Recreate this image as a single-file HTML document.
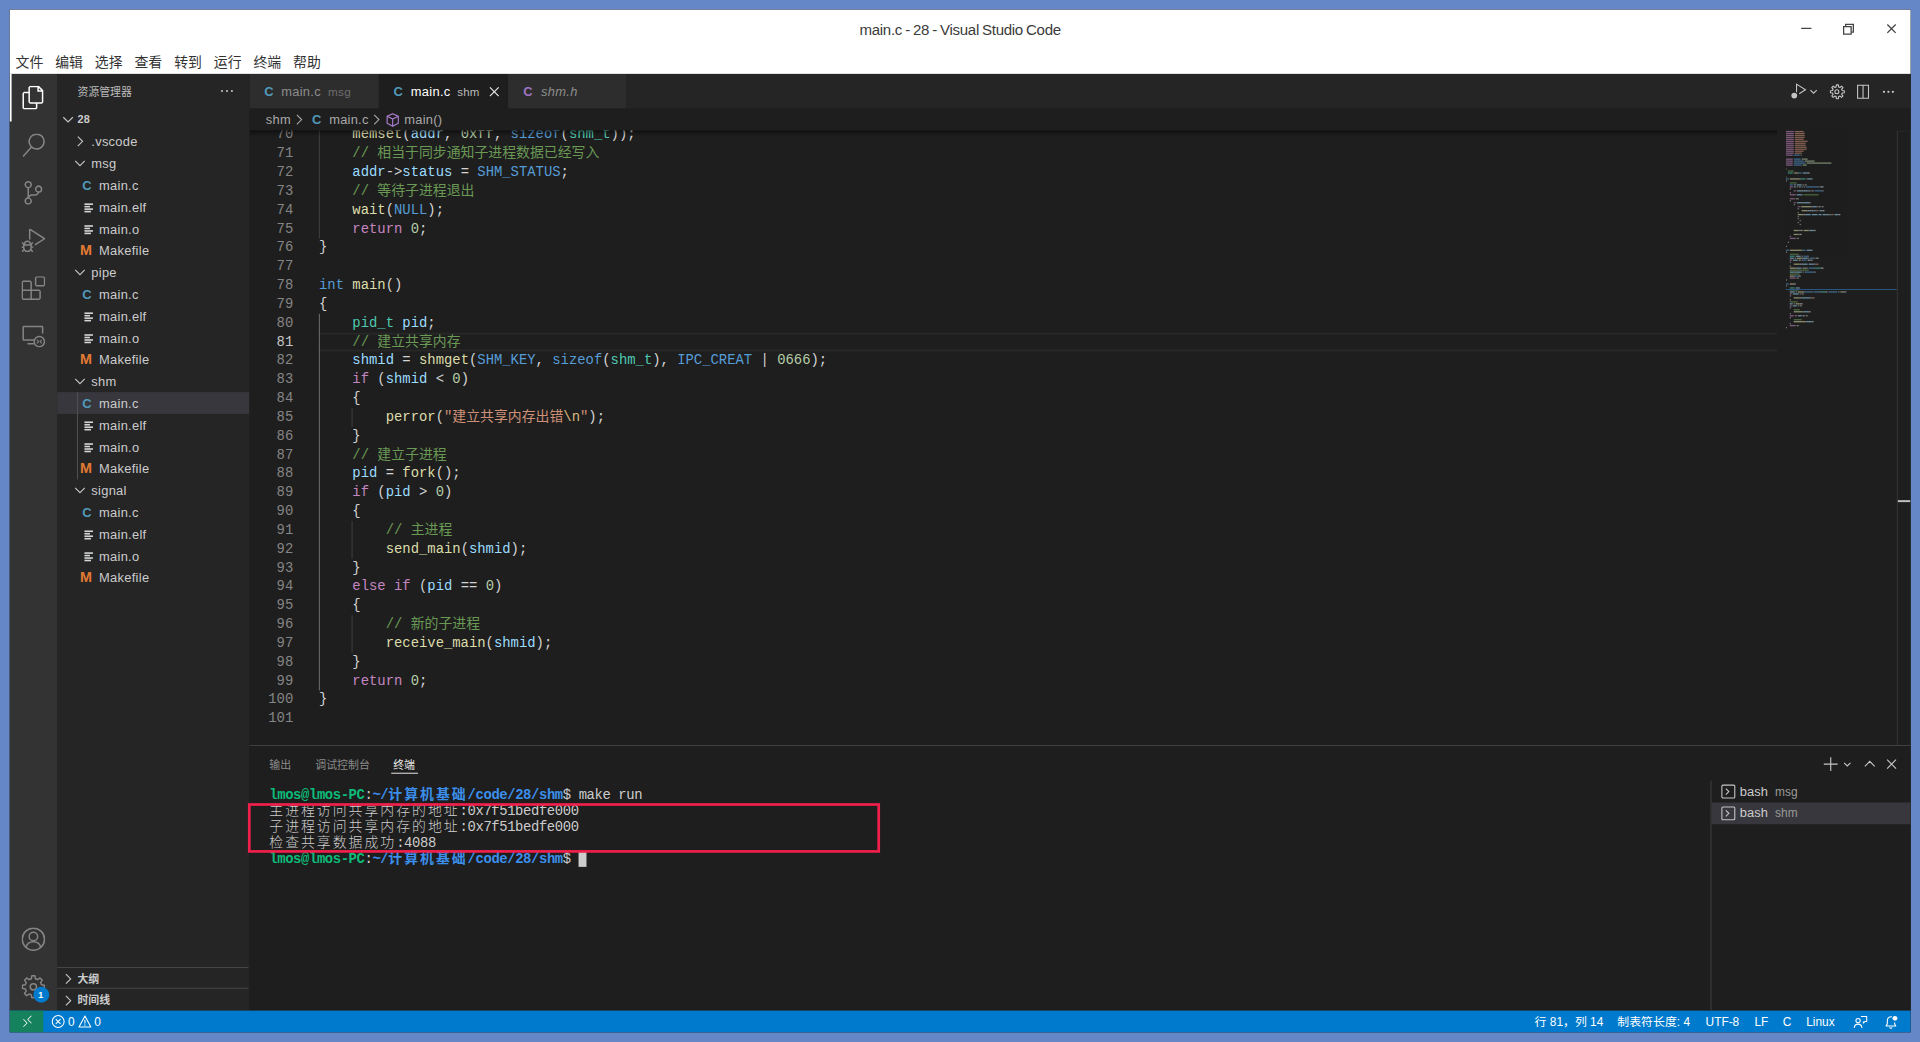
<!DOCTYPE html>
<html lang="zh-CN"><head><meta charset="utf-8"><title>main.c - 28 - Visual Studio Code</title>
<style>
*{box-sizing:border-box}
html,body{margin:0;padding:0}
body{width:1920px;height:1042px;overflow:hidden;background:#6587c7;position:relative;font-family:"Liberation Sans","Noto Sans CJK SC",sans-serif;}
#win{position:absolute;left:0;top:0;width:1918px;height:1031.8px;transform:translate(9.6px,9.5px) scale(0.9912);transform-origin:0 0;background:#252526;overflow:hidden;}
.abs{position:absolute}
#title{position:absolute;left:0;top:0;width:1918px;height:40px;line-height:41.4px;text-align:center;font-size:15.2px;color:#3b3b3b;letter-spacing:-0.3px;word-spacing:-0.8px}
#menu{position:absolute;left:0;top:40px;height:25px;display:flex;font-size:14px;color:#333;line-height:26.6px;}
#menu span{display:block;width:40px;text-align:center}
#back{position:absolute;left:0;top:0;width:1918px;height:65px;background:#fff}
#act{position:absolute;left:0;top:65px;width:48.6px;height:945px;background:#333333}
#side{position:absolute;left:48.4px;top:65px;width:194px;height:945px;background:#252526;color:#cccccc;font-size:13px;overflow:hidden}
#edwrap{position:absolute;left:242px;top:65px;width:1676px;height:945px;background:#1e1e1e;overflow:hidden}
#status{position:absolute;left:0;top:1009.6px;width:1918px;height:22.4px;background:#007acc;color:#fff;font-size:12px;line-height:24.2px}
.row{position:absolute;left:0;width:194px;height:22px;line-height:23px;white-space:nowrap;letter-spacing:0.3px}
.row .t{position:absolute;top:0}
.row svg{position:absolute}
.ico{position:absolute;top:0;font-weight:bold;font-size:13px}
#tabs{position:absolute;left:0;top:0;width:100%;height:35px;background:#252526}
.tab{position:absolute;top:0;height:35px;line-height:36.8px;font-size:13px;white-space:nowrap;letter-spacing:0.3px}
#bc{position:absolute;left:0;top:35px;width:100%;height:22px;line-height:24.2px;letter-spacing:0.25px;font-size:13px;color:#a9a9a9;background:#1e1e1e;white-space:nowrap}
#code{position:absolute;left:0;top:57px;width:100%;height:620.3px;overflow:hidden;font-family:"Liberation Mono","Noto Sans CJK SC",monospace;font-size:14px;line-height:19px;color:#d4d4d4}
.ln{position:absolute;left:0;width:44.2px;text-align:right;color:#858585;height:19px;white-space:pre;padding-top:0.3px;line-height:19px}
.cl{position:absolute;left:71px;height:19px;white-space:pre;padding-top:0.3px}
.k{color:#c586c0}.b{color:#569cd6}.ty{color:#4ec9b0}.f{color:#dcdcaa}.v{color:#9cdcfe}.n{color:#b5cea8}.s{color:#ce9178}.c{color:#6a9955}.e{color:#d7ba7d}
.ig{position:absolute;width:1px;background:#404040}
#panel{position:absolute;left:0;top:677.3px;width:100%;height:268px;border-top:1px solid rgba(128,128,128,.35);background:#1e1e1e}
.ptab{position:absolute;top:9.6px;height:18px;line-height:18px;font-size:11px;color:#8b8b8b;white-space:nowrap}
.trow{position:absolute;left:20px;height:16px;line-height:16px;font-family:"Liberation Mono","Noto Sans CJK SC",monospace;font-size:14px;color:#cccccc;white-space:pre;letter-spacing:-0.4px}
.trow .z{letter-spacing:2px;font-weight:300}
.trow .bl .z{font-weight:bold}
.g{color:#0dbc79;font-weight:bold}.bl{color:#3b8eea;font-weight:bold}
.sb{position:absolute;top:0;height:22px;white-space:nowrap}
</style></head>
<body>
<div id="win">
<div id="back"></div>
<div id="title">main.c - 28 - Visual Studio Code</div>
<svg class="abs" style="left:1795px;top:7px" width="115" height="26" viewBox="0 0 115 26" fill="none" stroke="#444" stroke-width="1.3">
<path d="M12.500 12h10.300"/>
<path d="M55.300 10.200h7.600v7.600h-7.600z"/><path d="M57.300 10v-2h7.800v7.800h-2"/>
<path d="M99.400 8.200l8.400 8.400M107.800 8.200l-8.400 8.400"/></svg>
<div id="menu"><span>文件</span><span>编辑</span><span>选择</span><span>查看</span><span>转到</span><span>运行</span><span>终端</span><span>帮助</span></div>
<div id="act">
<div class="abs" style="left:0;top:0;width:2px;height:48px;background:#fff"></div>
<svg class="abs" style="left:12px;top:12px" width="24" height="24" viewBox="0 0 24 24" fill="#ffffff"><path d="M17.5 0h-9L7 1.5V6H2.5L1 7.5v15.07L2.5 24h12.07L16 22.57V18h4.7l1.3-1.43V4.5L17.5 0zm0 2.12l2.38 2.38H17.5V2.12zm-3 20.38h-12v-15H7v9.07L8.5 18h6v4.5zm6-6h-12v-15H16V6h4.5v10.5z"/></svg>
<svg class="abs" style="left:12px;top:60px" width="24" height="24" viewBox="0 0 24 24" fill="#858585"><path d="M15.25 0a8.25 8.25 0 0 0-6.18 13.72L1 22.88l1.12 1 8.05-9.12A8.251 8.251 0 1 0 15.25.01V0zm0 15a6.75 6.75 0 1 1 0-13.5 6.75 6.75 0 0 1 0 13.5z"/></svg>
<svg class="abs" style="left:12px;top:108px" width="24" height="24" viewBox="0 0 24 24" fill="#858585"><path d="M21.007 8.222A3.738 3.738 0 0 0 15.045 5.2a3.737 3.737 0 0 0 1.156 6.583 2.988 2.988 0 0 1-2.668 1.67h-2.99a4.456 4.456 0 0 0-2.989 1.165V7.4a3.737 3.737 0 1 0-1.494 0v9.117a3.776 3.776 0 1 0 1.816.099 2.99 2.99 0 0 1 2.668-1.667h2.99a4.484 4.484 0 0 0 4.223-3.039 3.736 3.736 0 0 0 3.25-3.687zM4.565 3.738a2.242 2.242 0 1 1 4.484 0 2.242 2.242 0 0 1-4.484 0zm4.484 16.441a2.242 2.242 0 1 1-4.484 0 2.242 2.242 0 0 1 4.484 0zm8.221-9.715a2.242 2.242 0 1 1 0-4.485 2.242 2.242 0 0 1 0 4.485z"/></svg>
<svg class="abs" style="left:12px;top:156px" width="24" height="24" viewBox="0 0 24 24" fill="#858585"><path d="M10.94 13.5l-1.32 1.32a3.73 3.73 0 0 0-7.24 0L1.06 13.5 0 14.56l1.72 1.72-.22.22V18H0v1.5h1.5v.08c.077.489.214.966.41 1.42L0 22.94 1.06 24l1.65-1.65A4.308 4.308 0 0 0 6 24a4.31 4.31 0 0 0 3.29-1.65L10.94 24 12 22.94 10.09 21c.198-.464.336-.951.41-1.45v-.1H12V18h-1.5v-1.5l-.22-.22L12 14.56l-1.06-1.06zM6 13.5a2.25 2.25 0 0 1 2.25 2.25h-4.5A2.25 2.25 0 0 1 6 13.5zm3 6a3.33 3.33 0 0 1-3 3 3.33 3.33 0 0 1-3-3v-2.25h6v2.25zm14.76-9.9v1.26L13.5 17.37V15.6l8.5-5.37L9 2v9.46a5.07 5.07 0 0 0-1.5-.72V.63L8.64 0l15.12 9.6z"/></svg>
<svg class="abs" style="left:12px;top:204px" width="24" height="24" viewBox="0 0 24 24" fill="#858585"><path d="M13.5 1.5L15 0h7.5L24 1.5V9l-1.5 1.5H15L13.5 9V1.5zm1.5 0V9h7.5V1.5H15zM0 15V6l1.5-1.5H9L10.5 6v7.5H18l1.5 1.5v7.5L18 24H1.5L0 22.5V15zm9-1.5V6H1.5v7.5H9zM9 15H1.5v7.5H9V15zm1.5 7.5H18V15h-7.5v7.5z"/></svg>
<svg class="abs" style="left:12px;top:252px" width="24" height="24" viewBox="0 0 24 24" fill="none" stroke="#858585" stroke-width="1.5">
<path d="M13.5 16.5H2.2L1.7 16V3.3l.5-.5h18.6l.5.5V10"/><path d="M6 20.2h6.5"/><circle cx="18" cy="18" r="5.2"/><path d="M15.6 16.2l1.6 1.8-1.6 1.8M20.4 16.2l-1.6 1.8 1.6 1.8" stroke-width="1.1"/></svg>
<svg class="abs" style="left:12px;top:861px" width="24" height="24" viewBox="0 0 24 24" fill="none" stroke="#858585" stroke-width="1.5">
<circle cx="12" cy="12" r="11.2"/><circle cx="12" cy="9.3" r="4.3"/><path d="M4.6 20.2c.8-3.6 3.7-5.7 7.4-5.7s6.600 2.100 7.400 5.700"/></svg>
<svg class="abs" style="left:12px;top:909px" width="24" height="24" viewBox="0 0 24 24" fill="none" stroke="#858585" stroke-width="1.5" stroke-linejoin="round"><path d="M23.09 10.42L23.09 13.58L20.14 14.09L19.23 16.28L20.96 18.72L18.72 20.96L16.28 19.23L14.09 20.14L13.58 23.09L10.42 23.09L9.91 20.14L7.72 19.23L5.28 20.96L3.04 18.72L4.77 16.28L3.86 14.09L0.91 13.58L0.91 10.42L3.86 9.91L4.77 7.72L3.04 5.28L5.28 3.04L7.72 4.77L9.91 3.86L10.42 0.91L13.58 0.91L14.09 3.86L16.28 4.77L18.72 3.04L20.96 5.28L19.23 7.72L20.14 9.91Z"/><circle cx="12" cy="12" r="3.2"/></svg>
<div class="abs" style="left:23.5px;top:921px;width:16px;height:16px;border-radius:8px;background:#007acc;color:#fff;font-size:9px;font-weight:bold;line-height:16px;text-align:center">1</div>
</div>
<div id="side">
<div class="abs" style="left:20px;top:0;height:35px;line-height:36px;font-size:11px;color:#bbbbbb">资源管理器</div>
<svg class="abs" style="left:163px;top:9.400px" width="16" height="16" viewBox="0 0 16 16" fill="#c5c5c5"><circle cx="3.300" cy="8.300" r="1.050"/><circle cx="8.300" cy="8.300" r="1.050"/><circle cx="13.300" cy="8.300" r="1.050"/></svg>
<div class="row" style="top:35px;"><svg style="left:2.5px;top:3px" width="16" height="16" viewBox="0 0 16 16" fill="none" stroke="#c5c5c5" stroke-width="1.15"><path d="M3.2 5.7 8 10.5l4.800-4.800"/></svg><span class="t" style="left:20px;font-size:11px;font-weight:bold;color:#cccccc">28</span></div>
<div class="row" style="top:57px;"><svg style="left:14.3px;top:3px" width="16" height="16" viewBox="0 0 16 16" fill="none" stroke="#c5c5c5" stroke-width="1.15"><path d="M5.800 3.200 10.600 8l-4.800 4.800"/></svg><span class="t" style="left:34px">.vscode</span></div>
<div class="row" style="top:79px;"><svg style="left:14.3px;top:3px" width="16" height="16" viewBox="0 0 16 16" fill="none" stroke="#c5c5c5" stroke-width="1.15"><path d="M3.2 5.7 8 10.5l4.800-4.800"/></svg><span class="t" style="left:34px">msg</span></div>
<div class="row" style="top:101px;"><span class="ico" style="left:25px;color:#519aba">C</span><span class="t" style="left:41.8px">main.c</span></div>
<div class="row" style="top:123px;"><svg style="left:26px;top:5.5px" width="12" height="12" viewBox="0 0 12 12" fill="#d4d7d6"><rect x="1.500" y="1.600" width="8.6" height="1.600"/><rect x="1.500" y="4.100" width="5.600" height="1.600"/><rect x="1.500" y="6.600" width="8.6" height="1.600"/><rect x="1.500" y="9.100" width="6.600" height="1.600"/></svg><span class="t" style="left:41.8px">main.elf</span></div>
<div class="row" style="top:145px;"><svg style="left:26px;top:5.5px" width="12" height="12" viewBox="0 0 12 12" fill="#d4d7d6"><rect x="1.500" y="1.600" width="8.6" height="1.600"/><rect x="1.500" y="4.100" width="5.600" height="1.600"/><rect x="1.500" y="6.600" width="8.6" height="1.600"/><rect x="1.500" y="9.100" width="6.600" height="1.600"/></svg><span class="t" style="left:41.8px">main.o</span></div>
<div class="row" style="top:167px;"><span class="ico" style="left:22.6px;color:#e37933;font-size:14.5px">M</span><span class="t" style="left:41.8px">Makefile</span></div>
<div class="row" style="top:189px;"><svg style="left:14.3px;top:3px" width="16" height="16" viewBox="0 0 16 16" fill="none" stroke="#c5c5c5" stroke-width="1.15"><path d="M3.2 5.7 8 10.5l4.800-4.800"/></svg><span class="t" style="left:34px">pipe</span></div>
<div class="row" style="top:211px;"><span class="ico" style="left:25px;color:#519aba">C</span><span class="t" style="left:41.8px">main.c</span></div>
<div class="row" style="top:233px;"><svg style="left:26px;top:5.5px" width="12" height="12" viewBox="0 0 12 12" fill="#d4d7d6"><rect x="1.500" y="1.600" width="8.6" height="1.600"/><rect x="1.500" y="4.100" width="5.600" height="1.600"/><rect x="1.500" y="6.600" width="8.6" height="1.600"/><rect x="1.500" y="9.100" width="6.600" height="1.600"/></svg><span class="t" style="left:41.8px">main.elf</span></div>
<div class="row" style="top:255px;"><svg style="left:26px;top:5.5px" width="12" height="12" viewBox="0 0 12 12" fill="#d4d7d6"><rect x="1.500" y="1.600" width="8.6" height="1.600"/><rect x="1.500" y="4.100" width="5.600" height="1.600"/><rect x="1.500" y="6.600" width="8.6" height="1.600"/><rect x="1.500" y="9.100" width="6.600" height="1.600"/></svg><span class="t" style="left:41.8px">main.o</span></div>
<div class="row" style="top:277px;"><span class="ico" style="left:22.6px;color:#e37933;font-size:14.5px">M</span><span class="t" style="left:41.8px">Makefile</span></div>
<div class="row" style="top:299px;"><svg style="left:14.3px;top:3px" width="16" height="16" viewBox="0 0 16 16" fill="none" stroke="#c5c5c5" stroke-width="1.15"><path d="M3.2 5.7 8 10.5l4.800-4.800"/></svg><span class="t" style="left:34px">shm</span></div>
<div class="row" style="top:321px;background:#37373d;"><span class="ico" style="left:25px;color:#519aba">C</span><span class="t" style="left:41.8px">main.c</span></div>
<div class="row" style="top:343px;"><svg style="left:26px;top:5.5px" width="12" height="12" viewBox="0 0 12 12" fill="#d4d7d6"><rect x="1.500" y="1.600" width="8.6" height="1.600"/><rect x="1.500" y="4.100" width="5.600" height="1.600"/><rect x="1.500" y="6.600" width="8.6" height="1.600"/><rect x="1.500" y="9.100" width="6.600" height="1.600"/></svg><span class="t" style="left:41.8px">main.elf</span></div>
<div class="row" style="top:365px;"><svg style="left:26px;top:5.5px" width="12" height="12" viewBox="0 0 12 12" fill="#d4d7d6"><rect x="1.500" y="1.600" width="8.6" height="1.600"/><rect x="1.500" y="4.100" width="5.600" height="1.600"/><rect x="1.500" y="6.600" width="8.6" height="1.600"/><rect x="1.500" y="9.100" width="6.600" height="1.600"/></svg><span class="t" style="left:41.8px">main.o</span></div>
<div class="row" style="top:387px;"><span class="ico" style="left:22.6px;color:#e37933;font-size:14.5px">M</span><span class="t" style="left:41.8px">Makefile</span></div>
<div class="row" style="top:409px;"><svg style="left:14.3px;top:3px" width="16" height="16" viewBox="0 0 16 16" fill="none" stroke="#c5c5c5" stroke-width="1.15"><path d="M3.2 5.7 8 10.5l4.800-4.800"/></svg><span class="t" style="left:34px">signal</span></div>
<div class="row" style="top:431px;"><span class="ico" style="left:25px;color:#519aba">C</span><span class="t" style="left:41.8px">main.c</span></div>
<div class="row" style="top:453px;"><svg style="left:26px;top:5.5px" width="12" height="12" viewBox="0 0 12 12" fill="#d4d7d6"><rect x="1.500" y="1.600" width="8.6" height="1.600"/><rect x="1.500" y="4.100" width="5.600" height="1.600"/><rect x="1.500" y="6.600" width="8.6" height="1.600"/><rect x="1.500" y="9.100" width="6.600" height="1.600"/></svg><span class="t" style="left:41.8px">main.elf</span></div>
<div class="row" style="top:475px;"><svg style="left:26px;top:5.5px" width="12" height="12" viewBox="0 0 12 12" fill="#d4d7d6"><rect x="1.500" y="1.600" width="8.6" height="1.600"/><rect x="1.500" y="4.100" width="5.600" height="1.600"/><rect x="1.500" y="6.600" width="8.6" height="1.600"/><rect x="1.500" y="9.100" width="6.600" height="1.600"/></svg><span class="t" style="left:41.8px">main.o</span></div>
<div class="row" style="top:497px;"><span class="ico" style="left:22.6px;color:#e37933;font-size:14.5px">M</span><span class="t" style="left:41.8px">Makefile</span></div>
<div class="abs" style="left:19.4px;top:321px;width:1px;height:88px;background:#505050"></div>
<div class="abs" style="left:0;top:900.5px;width:193px;height:22px;border-top:1px solid rgba(204,204,204,.2);line-height:23px"><span class="row" style="top:0"><svg style="left:2.5px;top:3.5px" width="16" height="16" viewBox="0 0 16 16" fill="none" stroke="#c5c5c5" stroke-width="1.15"><path d="M5.800 3.200 10.600 8l-4.800 4.800"/></svg></span><span class="abs" style="left:20px;top:0;font-size:11px;font-weight:bold;color:#cccccc">大纲</span></div>
<div class="abs" style="left:0;top:922.4px;width:193px;height:22px;border-top:1px solid rgba(204,204,204,.2);line-height:23px"><span class="row" style="top:0"><svg style="left:2.5px;top:3.5px" width="16" height="16" viewBox="0 0 16 16" fill="none" stroke="#c5c5c5" stroke-width="1.15"><path d="M5.800 3.200 10.600 8l-4.800 4.800"/></svg></span><span class="abs" style="left:20px;top:0;font-size:11px;font-weight:bold;color:#cccccc">时间线</span></div>
</div>
<div id="edwrap">
<div id="tabs">
<div class="tab" style="left:0;width:131px;background:#2d2d2d;border-right:1px solid #252526;color:#8e8e8e"><span class="ico" style="left:15px;color:#519aba">C</span><span class="abs" style="left:32px">main.c</span><span class="abs" style="left:79.200px;font-size:11.800px;color:#6e6e6e">msg</span></div>
<div class="tab" style="left:131px;width:130px;background:#1e1e1e;color:#ffffff"><span class="ico" style="left:14.200px;color:#519aba">C</span><span class="abs" style="left:31.800px">main.c</span><span class="abs" style="left:78.500px;font-size:11.600px;color:#b9b9b9">shm</span><svg class="abs" style="left:107.500px;top:9.500px" width="16" height="16" viewBox="0 0 16 16" fill="none" stroke="#e8e8e8" stroke-width="1.2"><path d="M3.600 3.600l8.800 8.800M12.400 3.600l-8.800 8.800"/></svg></div>
<div class="tab" style="left:261px;width:120px;background:#2d2d2d;border-right:1px solid #252526;color:#8e8e8e"><span class="ico" style="left:15.300px;color:#a074c4">C</span><span class="abs" style="left:33.200px;font-style:italic">shm.h</span></div>
<svg class="abs" style="left:1545px;top:8px" width="130" height="20" viewBox="0 0 130 20" fill="none" stroke="#c5c5c5" stroke-width="1.1">
<g transform="translate(8.3 0)"><path d="M7.500 10.500V2.300l9 5.700-6.300 4"/><circle cx="5.200" cy="13.800" r="2.900" fill="#c5c5c5" stroke="none"/><path d="M21.500 8.300l3.200 3.200 3.200-3.200"/></g>
<circle cx="56.500" cy="10" r="2"/>
<path d="M77.400 3.500h11v13h-11zM82.900 3.500v13"/>
<g fill="#c5c5c5" stroke="none"><circle cx="104" cy="10" r="1.150"/><circle cx="108.500" cy="10" r="1.150"/><circle cx="113" cy="10" r="1.150"/></g></svg>
<svg class="abs" style="left:1593.5px;top:10px" width="16" height="16" viewBox="0 0 24 24" fill="none" stroke="#c5c5c5" stroke-width="1.700" stroke-linejoin="round"><path d="M22.49 10.51L22.49 13.49L19.36 13.89L18.54 15.87L20.48 18.36L18.36 20.48L15.87 18.54L13.89 19.36L13.49 22.49L10.51 22.49L10.11 19.36L8.13 18.54L5.64 20.48L3.52 18.36L5.46 15.87L4.64 13.89L1.51 13.49L1.51 10.51L4.64 10.11L5.46 8.13L3.52 5.64L5.64 3.52L8.13 5.46L10.11 4.64L10.51 1.51L13.49 1.51L13.89 4.64L15.87 5.46L18.36 3.52L20.48 5.64L18.54 8.13L19.36 10.11Z"/></svg>
</div>
<div id="bc"><span class="abs" style="left:16.500px">shm</span><svg class="abs" style="left:41.600px;top:3px" width="16" height="16" viewBox="0 0 16 16" fill="none" stroke="#a9a9a9" stroke-width="1.100"><path d="M5.800 3.200 10.600 8l-4.800 4.800"/></svg><span class="ico" style="left:63px;color:#519aba">C</span><span class="abs" style="left:80.400px">main.c</span><svg class="abs" style="left:120px;top:3px" width="16" height="16" viewBox="0 0 16 16" fill="none" stroke="#a9a9a9" stroke-width="1.100"><path d="M5.800 3.200 10.600 8l-4.800 4.800"/></svg><svg class="abs" style="left:136.600px;top:3.500px" width="15" height="15" viewBox="0 0 16 16" fill="none" stroke="#b180d7" stroke-width="1.200" stroke-linejoin="round"><path d="M8 1.300l6 2.700v7.600l-6 3.100-6-3.100V4z"/><path d="M2 4l6 2.900L14 4M8 6.900v7.800"/></svg><span class="abs" style="left:156.200px">main()</span></div>
<div id="code">
<div class="abs" style="left:69.5px;top:203.5px;width:1471.9px;height:19px;border-top:2px solid #282828;border-bottom:2px solid #282828"></div>
<div class="ig" style="left:69.5px;top:-5.5px;height:114px"></div>
<div class="ig" style="left:69.5px;top:184.5px;height:380px;background:#707070"></div>
<div class="ig" style="left:103.1px;top:279.5px;height:19px"></div>
<div class="ig" style="left:103.1px;top:393.5px;height:38px"></div>
<div class="ig" style="left:103.1px;top:488.5px;height:38px"></div>
<div class="ln" style="top:-5.5px;color:#858585">70</div><div class="cl" style="top:-5.5px;left:70.2px">    <span class="f">memset</span>(<span class="v">addr</span>, <span class="n">0xff</span>, <span class="b">sizeof</span>(<span class="ty">shm_t</span>));</div>
<div class="ln" style="top:13.5px;color:#858585">71</div><div class="cl" style="top:13.5px;left:70.2px">    <span class="c">// 相当于同步通知子进程数据已经写入</span></div>
<div class="ln" style="top:32.5px;color:#858585">72</div><div class="cl" style="top:32.5px;left:70.2px">    <span class="v">addr</span>-&gt;<span class="v">status</span> = <span class="b">SHM_STATUS</span>;</div>
<div class="ln" style="top:51.5px;color:#858585">73</div><div class="cl" style="top:51.5px;left:70.2px">    <span class="c">// 等待子进程退出</span></div>
<div class="ln" style="top:70.5px;color:#858585">74</div><div class="cl" style="top:70.5px;left:70.2px">    <span class="f">wait</span>(<span class="b">NULL</span>);</div>
<div class="ln" style="top:89.5px;color:#858585">75</div><div class="cl" style="top:89.5px;left:70.2px">    <span class="k">return</span> <span class="n">0</span>;</div>
<div class="ln" style="top:108.5px;color:#858585">76</div><div class="cl" style="top:108.5px;left:70.2px">}</div>
<div class="ln" style="top:127.5px;color:#858585">77</div>
<div class="ln" style="top:146.5px;color:#858585">78</div><div class="cl" style="top:146.5px;left:70.2px"><span class="b">int</span> <span class="f">main</span>()</div>
<div class="ln" style="top:165.5px;color:#858585">79</div><div class="cl" style="top:165.5px;left:70.2px">{</div>
<div class="ln" style="top:184.5px;color:#858585">80</div><div class="cl" style="top:184.5px;left:70.2px">    <span class="ty">pid_t</span> <span class="v">pid</span>;</div>
<div class="ln" style="top:203.5px;color:#c6c6c6">81</div><div class="cl" style="top:203.5px;left:70.2px">    <span class="c">// 建立共享内存</span></div>
<div class="ln" style="top:222.5px;color:#858585">82</div><div class="cl" style="top:222.5px;left:70.2px">    <span class="v">shmid</span> = <span class="f">shmget</span>(<span class="b">SHM_KEY</span>, <span class="b">sizeof</span>(<span class="ty">shm_t</span>), <span class="b">IPC_CREAT</span> | <span class="n">0666</span>);</div>
<div class="ln" style="top:241.5px;color:#858585">83</div><div class="cl" style="top:241.5px;left:70.2px">    <span class="k">if</span> (<span class="v">shmid</span> &lt; <span class="n">0</span>)</div>
<div class="ln" style="top:260.5px;color:#858585">84</div><div class="cl" style="top:260.5px;left:70.2px">    {</div>
<div class="ln" style="top:279.5px;color:#858585">85</div><div class="cl" style="top:279.5px;left:70.2px">        <span class="f">perror</span>(<span class="s">"建立共享内存出错</span><span class="e">\n</span><span class="s">"</span>);</div>
<div class="ln" style="top:298.5px;color:#858585">86</div><div class="cl" style="top:298.5px;left:70.2px">    }</div>
<div class="ln" style="top:317.5px;color:#858585">87</div><div class="cl" style="top:317.5px;left:70.2px">    <span class="c">// 建立子进程</span></div>
<div class="ln" style="top:336.5px;color:#858585">88</div><div class="cl" style="top:336.5px;left:70.2px">    <span class="v">pid</span> = <span class="f">fork</span>();</div>
<div class="ln" style="top:355.5px;color:#858585">89</div><div class="cl" style="top:355.5px;left:70.2px">    <span class="k">if</span> (<span class="v">pid</span> &gt; <span class="n">0</span>)</div>
<div class="ln" style="top:374.5px;color:#858585">90</div><div class="cl" style="top:374.5px;left:70.2px">    {</div>
<div class="ln" style="top:393.5px;color:#858585">91</div><div class="cl" style="top:393.5px;left:70.2px">        <span class="c">// 主进程</span></div>
<div class="ln" style="top:412.5px;color:#858585">92</div><div class="cl" style="top:412.5px;left:70.2px">        <span class="f">send_main</span>(<span class="v">shmid</span>);</div>
<div class="ln" style="top:431.5px;color:#858585">93</div><div class="cl" style="top:431.5px;left:70.2px">    }</div>
<div class="ln" style="top:450.5px;color:#858585">94</div><div class="cl" style="top:450.5px;left:70.2px">    <span class="k">else</span> <span class="k">if</span> (<span class="v">pid</span> == <span class="n">0</span>)</div>
<div class="ln" style="top:469.5px;color:#858585">95</div><div class="cl" style="top:469.5px;left:70.2px">    {</div>
<div class="ln" style="top:488.5px;color:#858585">96</div><div class="cl" style="top:488.5px;left:70.2px">        <span class="c">// 新的子进程</span></div>
<div class="ln" style="top:507.5px;color:#858585">97</div><div class="cl" style="top:507.5px;left:70.2px">        <span class="f">receive_main</span>(<span class="v">shmid</span>);</div>
<div class="ln" style="top:526.5px;color:#858585">98</div><div class="cl" style="top:526.5px;left:70.2px">    }</div>
<div class="ln" style="top:545.5px;color:#858585">99</div><div class="cl" style="top:545.5px;left:70.2px">    <span class="k">return</span> <span class="n">0</span>;</div>
<div class="ln" style="top:564.5px;color:#858585">100</div><div class="cl" style="top:564.5px;left:70.2px">}</div>
<div class="ln" style="top:583.5px;color:#858585">101</div>
<div class="abs" style="left:0;top:0;width:1541.4px;height:6px;box-shadow:#000 0 6px 6px -6px inset"></div>
<svg class="abs" style="left:1549.5px;top:0" width="112" height="210" viewBox="0 0 112 210" opacity="0.58"><rect x="0" y="0.3" width="8" height="1.300" fill="#c586c0"/><rect x="9" y="0.3" width="9" height="1.300" fill="#ce9178"/><rect x="0" y="2.3" width="8" height="1.300" fill="#c586c0"/><rect x="9" y="2.3" width="10" height="1.300" fill="#ce9178"/><rect x="0" y="4.3" width="8" height="1.300" fill="#c586c0"/><rect x="9" y="4.3" width="10" height="1.300" fill="#ce9178"/><rect x="0" y="6.3" width="8" height="1.300" fill="#c586c0"/><rect x="9" y="6.3" width="10" height="1.300" fill="#ce9178"/><rect x="0" y="8.3" width="8" height="1.300" fill="#c586c0"/><rect x="9" y="8.3" width="9" height="1.300" fill="#ce9178"/><rect x="0" y="10.3" width="8" height="1.300" fill="#c586c0"/><rect x="9" y="10.3" width="13" height="1.300" fill="#ce9178"/><rect x="0" y="12.3" width="8" height="1.300" fill="#c586c0"/><rect x="9" y="12.3" width="11" height="1.300" fill="#ce9178"/><rect x="0" y="14.3" width="8" height="1.300" fill="#c586c0"/><rect x="9" y="14.3" width="11" height="1.300" fill="#ce9178"/><rect x="0" y="16.3" width="8" height="1.300" fill="#c586c0"/><rect x="9" y="16.3" width="12" height="1.300" fill="#ce9178"/><rect x="0" y="18.3" width="8" height="1.300" fill="#c586c0"/><rect x="9" y="18.3" width="12" height="1.300" fill="#ce9178"/><rect x="0" y="20.3" width="8" height="1.300" fill="#c586c0"/><rect x="9" y="20.3" width="9" height="1.300" fill="#ce9178"/><rect x="0" y="22.3" width="8" height="1.300" fill="#c586c0"/><rect x="9" y="22.3" width="7" height="1.300" fill="#ce9178"/><rect x="0" y="24.3" width="7" height="1.300" fill="#c586c0"/><rect x="8" y="24.3" width="6" height="1.300" fill="#569cd6"/><rect x="15" y="24.3" width="1" height="1.300" fill="#b5cea8"/><rect x="0" y="28.3" width="7" height="1.300" fill="#c586c0"/><rect x="8" y="28.3" width="7" height="1.300" fill="#569cd6"/><rect x="16" y="28.3" width="6" height="1.300" fill="#b5cea8"/><rect x="0" y="30.3" width="7" height="1.300" fill="#c586c0"/><rect x="8" y="30.3" width="10" height="1.300" fill="#569cd6"/><rect x="19" y="30.3" width="10" height="1.300" fill="#b5cea8"/><rect x="0" y="32.3" width="7" height="1.300" fill="#c586c0"/><rect x="8" y="32.3" width="12" height="1.300" fill="#569cd6"/><rect x="21" y="32.3" width="25" height="1.300" fill="#b5cea8"/><rect x="0" y="34.3" width="7" height="1.300" fill="#c586c0"/><rect x="8" y="34.3" width="8" height="1.300" fill="#569cd6"/><rect x="17" y="34.3" width="4" height="1.300" fill="#b5cea8"/><rect x="0" y="38.3" width="1" height="1.300" fill="#6a9955"/><rect x="2" y="40.3" width="6" height="1.300" fill="#6a9955"/><rect x="2" y="42.3" width="5" height="1.300" fill="#4ec9b0"/><rect x="8" y="42.3" width="1" height="1.300" fill="#d4d4d4"/><rect x="9" y="42.3" width="3" height="1.300" fill="#dcdcaa"/><rect x="12" y="42.3" width="1" height="1.300" fill="#d4d4d4"/><rect x="13" y="42.3" width="3" height="1.300" fill="#569cd6"/><rect x="17" y="42.3" width="5" height="1.300" fill="#9cdcfe"/><rect x="22" y="42.3" width="2" height="1.300" fill="#d4d4d4"/><rect x="0" y="46.3" width="1" height="1.300" fill="#6a9955"/><rect x="0" y="48.3" width="3" height="1.300" fill="#569cd6"/><rect x="4" y="48.3" width="10" height="1.300" fill="#dcdcaa"/><rect x="14" y="48.3" width="1" height="1.300" fill="#d4d4d4"/><rect x="15" y="48.3" width="5" height="1.300" fill="#4ec9b0"/><rect x="21" y="48.3" width="1" height="1.300" fill="#d4d4d4"/><rect x="22" y="48.3" width="4" height="1.300" fill="#9cdcfe"/><rect x="26" y="48.3" width="1" height="1.300" fill="#d4d4d4"/><rect x="0" y="50.3" width="1" height="1.300" fill="#d4d4d4"/><rect x="4" y="52.3" width="7" height="1.300" fill="#6a9955"/><rect x="4" y="54.3" width="3" height="1.300" fill="#569cd6"/><rect x="8" y="54.3" width="1" height="1.300" fill="#9cdcfe"/><rect x="9" y="54.3" width="1" height="1.300" fill="#d4d4d4"/><rect x="11" y="54.3" width="5" height="1.300" fill="#9cdcfe"/><rect x="17" y="54.3" width="1" height="1.300" fill="#d4d4d4"/><rect x="19" y="54.3" width="1" height="1.300" fill="#b5cea8"/><rect x="20" y="54.3" width="1" height="1.300" fill="#d4d4d4"/><rect x="4" y="56.3" width="3" height="1.300" fill="#c586c0"/><rect x="8" y="56.3" width="1" height="1.300" fill="#d4d4d4"/><rect x="9" y="56.3" width="1" height="1.300" fill="#9cdcfe"/><rect x="11" y="56.3" width="1" height="1.300" fill="#d4d4d4"/><rect x="13" y="56.3" width="1" height="1.300" fill="#b5cea8"/><rect x="14" y="56.3" width="1" height="1.300" fill="#d4d4d4"/><rect x="16" y="56.3" width="1" height="1.300" fill="#9cdcfe"/><rect x="18" y="56.3" width="1" height="1.300" fill="#d4d4d4"/><rect x="20" y="56.3" width="12" height="1.300" fill="#569cd6"/><rect x="32" y="56.3" width="1" height="1.300" fill="#d4d4d4"/><rect x="34" y="56.3" width="1" height="1.300" fill="#9cdcfe"/><rect x="35" y="56.3" width="3" height="1.300" fill="#d4d4d4"/><rect x="4" y="58.3" width="1" height="1.300" fill="#d4d4d4"/><rect x="8" y="60.3" width="2" height="1.300" fill="#c586c0"/><rect x="11" y="60.3" width="1" height="1.300" fill="#d4d4d4"/><rect x="12" y="60.3" width="4" height="1.300" fill="#9cdcfe"/><rect x="16" y="60.3" width="2" height="1.300" fill="#d4d4d4"/><rect x="18" y="60.3" width="4" height="1.300" fill="#9cdcfe"/><rect x="22" y="60.3" width="1" height="1.300" fill="#d4d4d4"/><rect x="23" y="60.3" width="1" height="1.300" fill="#9cdcfe"/><rect x="24" y="60.3" width="1" height="1.300" fill="#d4d4d4"/><rect x="26" y="60.3" width="2" height="1.300" fill="#d4d4d4"/><rect x="29" y="60.3" width="8" height="1.300" fill="#569cd6"/><rect x="37" y="60.3" width="1" height="1.300" fill="#d4d4d4"/><rect x="4" y="62.3" width="1" height="1.300" fill="#d4d4d4"/><rect x="4" y="64.3" width="6" height="1.300" fill="#c586c0"/><rect x="11" y="64.3" width="5" height="1.300" fill="#9cdcfe"/><rect x="16" y="64.3" width="1" height="1.300" fill="#d4d4d4"/><rect x="18" y="64.3" width="15" height="1.300" fill="#6a9955"/><rect x="4" y="68.3" width="5" height="1.300" fill="#c586c0"/><rect x="10" y="68.3" width="1" height="1.300" fill="#d4d4d4"/><rect x="11" y="68.3" width="1" height="1.300" fill="#b5cea8"/><rect x="12" y="68.3" width="1" height="1.300" fill="#d4d4d4"/><rect x="4" y="70.3" width="1" height="1.300" fill="#d4d4d4"/><rect x="8" y="72.3" width="2" height="1.300" fill="#c586c0"/><rect x="11" y="72.3" width="1" height="1.300" fill="#d4d4d4"/><rect x="12" y="72.3" width="4" height="1.300" fill="#9cdcfe"/><rect x="16" y="72.3" width="2" height="1.300" fill="#d4d4d4"/><rect x="18" y="72.3" width="6" height="1.300" fill="#9cdcfe"/><rect x="24" y="72.3" width="1" height="1.300" fill="#d4d4d4"/><rect x="8" y="74.3" width="1" height="1.300" fill="#d4d4d4"/><rect x="12" y="76.3" width="2" height="1.300" fill="#c586c0"/><rect x="15" y="76.3" width="1" height="1.300" fill="#d4d4d4"/><rect x="16" y="76.3" width="10" height="1.300" fill="#dcdcaa"/><rect x="26" y="76.3" width="1" height="1.300" fill="#d4d4d4"/><rect x="27" y="76.3" width="4" height="1.300" fill="#9cdcfe"/><rect x="31" y="76.3" width="1" height="1.300" fill="#d4d4d4"/><rect x="33" y="76.3" width="2" height="1.300" fill="#d4d4d4"/><rect x="36" y="76.3" width="1" height="1.300" fill="#b5cea8"/><rect x="37" y="76.3" width="1" height="1.300" fill="#d4d4d4"/><rect x="12" y="78.3" width="1" height="1.300" fill="#d4d4d4"/><rect x="16" y="80.3" width="6" height="1.300" fill="#dcdcaa"/><rect x="22" y="80.3" width="2" height="1.300" fill="#d4d4d4"/><rect x="24" y="80.3" width="2" height="1.300" fill="#9cdcfe"/><rect x="26" y="80.3" width="2" height="1.300" fill="#d4d4d4"/><rect x="28" y="80.3" width="1" height="1.300" fill="#9cdcfe"/><rect x="29" y="80.3" width="1" height="1.300" fill="#d4d4d4"/><rect x="30" y="80.3" width="1" height="1.300" fill="#9cdcfe"/><rect x="31" y="80.3" width="2" height="1.300" fill="#ce9178"/><rect x="34" y="80.3" width="3" height="1.300" fill="#9cdcfe"/><rect x="37" y="80.3" width="2" height="1.300" fill="#d4d4d4"/><rect x="12" y="82.3" width="1" height="1.300" fill="#d4d4d4"/><rect x="12" y="84.3" width="6" height="1.300" fill="#dcdcaa"/><rect x="18" y="84.3" width="2" height="1.300" fill="#d4d4d4"/><rect x="20" y="84.3" width="5" height="1.300" fill="#9cdcfe"/><rect x="26" y="84.3" width="6" height="1.300" fill="#9cdcfe"/><rect x="33" y="84.3" width="3" height="1.300" fill="#9cdcfe"/><rect x="37" y="84.3" width="4" height="1.300" fill="#9cdcfe"/><rect x="41" y="84.3" width="2" height="1.300" fill="#d4d4d4"/><rect x="43" y="84.3" width="1" height="1.300" fill="#9cdcfe"/><rect x="44" y="84.3" width="1" height="1.300" fill="#d4d4d4"/><rect x="45" y="84.3" width="1" height="1.300" fill="#9cdcfe"/><rect x="46" y="84.3" width="2" height="1.300" fill="#ce9178"/><rect x="49" y="84.3" width="4" height="1.300" fill="#9cdcfe"/><rect x="53" y="84.3" width="2" height="1.300" fill="#d4d4d4"/><rect x="12" y="86.3" width="1" height="1.300" fill="#d4d4d4"/><rect x="12" y="88.3" width="1" height="1.300" fill="#d4d4d4"/><rect x="14" y="90.3" width="1" height="1.300" fill="#d4d4d4"/><rect x="12" y="92.3" width="1" height="1.300" fill="#d4d4d4"/><rect x="14" y="94.3" width="1" height="1.300" fill="#d4d4d4"/><rect x="8" y="100.3" width="5" height="1.300" fill="#dcdcaa"/><rect x="13" y="100.3" width="1" height="1.300" fill="#d4d4d4"/><rect x="14" y="100.3" width="1" height="1.300" fill="#b5cea8"/><rect x="15" y="100.3" width="2" height="1.300" fill="#d4d4d4"/><rect x="18" y="100.3" width="5" height="1.300" fill="#dcdcaa"/><rect x="23" y="100.3" width="1" height="1.300" fill="#d4d4d4"/><rect x="24" y="100.3" width="4" height="1.300" fill="#9cdcfe"/><rect x="28" y="100.3" width="2" height="1.300" fill="#d4d4d4"/><rect x="8" y="104.3" width="4" height="1.300" fill="#dcdcaa"/><rect x="12" y="104.3" width="1" height="1.300" fill="#d4d4d4"/><rect x="13" y="104.3" width="1" height="1.300" fill="#b5cea8"/><rect x="14" y="104.3" width="2" height="1.300" fill="#d4d4d4"/><rect x="4" y="106.3" width="1" height="1.300" fill="#d4d4d4"/><rect x="4" y="108.3" width="6" height="1.300" fill="#c586c0"/><rect x="11" y="108.3" width="1" height="1.300" fill="#b5cea8"/><rect x="12" y="108.3" width="1" height="1.300" fill="#d4d4d4"/><rect x="2" y="112.3" width="1" height="1.300" fill="#d4d4d4"/><rect x="0" y="116.3" width="1" height="1.300" fill="#d4d4d4"/><rect x="0" y="120.3" width="3" height="1.300" fill="#569cd6"/><rect x="4" y="120.3" width="12" height="1.300" fill="#dcdcaa"/><rect x="16" y="120.3" width="1" height="1.300" fill="#d4d4d4"/><rect x="17" y="120.3" width="3" height="1.300" fill="#569cd6"/><rect x="21" y="120.3" width="5" height="1.300" fill="#9cdcfe"/><rect x="26" y="120.3" width="1" height="1.300" fill="#d4d4d4"/><rect x="0" y="122.3" width="1" height="1.300" fill="#d4d4d4"/><rect x="4" y="124.3" width="9" height="1.300" fill="#6a9955"/><rect x="4" y="126.3" width="5" height="1.300" fill="#4ec9b0"/><rect x="10" y="126.3" width="1" height="1.300" fill="#d4d4d4"/><rect x="11" y="126.3" width="4" height="1.300" fill="#9cdcfe"/><rect x="16" y="126.3" width="1" height="1.300" fill="#d4d4d4"/><rect x="18" y="126.3" width="4" height="1.300" fill="#569cd6"/><rect x="22" y="126.3" width="1" height="1.300" fill="#d4d4d4"/><rect x="4" y="128.3" width="4" height="1.300" fill="#9cdcfe"/><rect x="9" y="128.3" width="1" height="1.300" fill="#d4d4d4"/><rect x="11" y="128.3" width="5" height="1.300" fill="#dcdcaa"/><rect x="16" y="128.3" width="1" height="1.300" fill="#d4d4d4"/><rect x="17" y="128.3" width="5" height="1.300" fill="#9cdcfe"/><rect x="22" y="128.3" width="1" height="1.300" fill="#d4d4d4"/><rect x="24" y="128.3" width="4" height="1.300" fill="#569cd6"/><rect x="28" y="128.3" width="1" height="1.300" fill="#d4d4d4"/><rect x="30" y="128.3" width="1" height="1.300" fill="#b5cea8"/><rect x="31" y="128.3" width="2" height="1.300" fill="#d4d4d4"/><rect x="4" y="130.3" width="2" height="1.300" fill="#c586c0"/><rect x="7" y="130.3" width="1" height="1.300" fill="#d4d4d4"/><rect x="8" y="130.3" width="4" height="1.300" fill="#9cdcfe"/><rect x="13" y="130.3" width="2" height="1.300" fill="#d4d4d4"/><rect x="16" y="130.3" width="1" height="1.300" fill="#d4d4d4"/><rect x="17" y="130.3" width="4" height="1.300" fill="#569cd6"/><rect x="22" y="130.3" width="3" height="1.300" fill="#d4d4d4"/><rect x="25" y="130.3" width="1" height="1.300" fill="#b5cea8"/><rect x="26" y="130.3" width="1" height="1.300" fill="#d4d4d4"/><rect x="4" y="132.3" width="1" height="1.300" fill="#d4d4d4"/><rect x="8" y="134.3" width="6" height="1.300" fill="#dcdcaa"/><rect x="14" y="134.3" width="2" height="1.300" fill="#d4d4d4"/><rect x="16" y="134.3" width="6" height="1.300" fill="#9cdcfe"/><rect x="23" y="134.3" width="5" height="1.300" fill="#9cdcfe"/><rect x="28" y="134.3" width="1" height="1.300" fill="#d4d4d4"/><rect x="29" y="134.3" width="1" height="1.300" fill="#9cdcfe"/><rect x="30" y="134.3" width="3" height="1.300" fill="#ce9178"/><rect x="4" y="136.3" width="1" height="1.300" fill="#d4d4d4"/><rect x="4" y="138.3" width="6" height="1.300" fill="#dcdcaa"/><rect x="10" y="138.3" width="1" height="1.300" fill="#d4d4d4"/><rect x="11" y="138.3" width="4" height="1.300" fill="#9cdcfe"/><rect x="15" y="138.3" width="1" height="1.300" fill="#d4d4d4"/><rect x="17" y="138.3" width="4" height="1.300" fill="#b5cea8"/><rect x="21" y="138.3" width="1" height="1.300" fill="#d4d4d4"/><rect x="23" y="138.3" width="6" height="1.300" fill="#569cd6"/><rect x="29" y="138.3" width="1" height="1.300" fill="#d4d4d4"/><rect x="30" y="138.3" width="5" height="1.300" fill="#4ec9b0"/><rect x="35" y="138.3" width="3" height="1.300" fill="#d4d4d4"/><rect x="4" y="140.3" width="19" height="1.300" fill="#6a9955"/><rect x="4" y="142.3" width="4" height="1.300" fill="#9cdcfe"/><rect x="8" y="142.3" width="2" height="1.300" fill="#d4d4d4"/><rect x="10" y="142.3" width="6" height="1.300" fill="#9cdcfe"/><rect x="17" y="142.3" width="1" height="1.300" fill="#d4d4d4"/><rect x="19" y="142.3" width="10" height="1.300" fill="#569cd6"/><rect x="29" y="142.3" width="1" height="1.300" fill="#d4d4d4"/><rect x="4" y="144.3" width="10" height="1.300" fill="#6a9955"/><rect x="4" y="146.3" width="4" height="1.300" fill="#dcdcaa"/><rect x="8" y="146.3" width="1" height="1.300" fill="#d4d4d4"/><rect x="9" y="146.3" width="4" height="1.300" fill="#569cd6"/><rect x="13" y="146.3" width="2" height="1.300" fill="#d4d4d4"/><rect x="4" y="148.3" width="6" height="1.300" fill="#c586c0"/><rect x="11" y="148.3" width="1" height="1.300" fill="#b5cea8"/><rect x="12" y="148.3" width="1" height="1.300" fill="#d4d4d4"/><rect x="0" y="150.3" width="1" height="1.300" fill="#d4d4d4"/><rect x="0" y="154.3" width="3" height="1.300" fill="#569cd6"/><rect x="4" y="154.3" width="4" height="1.300" fill="#dcdcaa"/><rect x="8" y="154.3" width="2" height="1.300" fill="#d4d4d4"/><rect x="0" y="156.3" width="1" height="1.300" fill="#d4d4d4"/><rect x="4" y="158.3" width="5" height="1.300" fill="#4ec9b0"/><rect x="10" y="158.3" width="3" height="1.300" fill="#9cdcfe"/><rect x="13" y="158.3" width="1" height="1.300" fill="#d4d4d4"/><rect x="4" y="160.3" width="9" height="1.300" fill="#6a9955"/><rect x="4" y="162.3" width="5" height="1.300" fill="#9cdcfe"/><rect x="10" y="162.3" width="1" height="1.300" fill="#d4d4d4"/><rect x="12" y="162.3" width="6" height="1.300" fill="#dcdcaa"/><rect x="18" y="162.3" width="1" height="1.300" fill="#d4d4d4"/><rect x="19" y="162.3" width="7" height="1.300" fill="#569cd6"/><rect x="26" y="162.3" width="1" height="1.300" fill="#d4d4d4"/><rect x="28" y="162.3" width="6" height="1.300" fill="#569cd6"/><rect x="34" y="162.3" width="1" height="1.300" fill="#d4d4d4"/><rect x="35" y="162.3" width="5" height="1.300" fill="#4ec9b0"/><rect x="40" y="162.3" width="2" height="1.300" fill="#d4d4d4"/><rect x="43" y="162.3" width="9" height="1.300" fill="#569cd6"/><rect x="53" y="162.3" width="1" height="1.300" fill="#d4d4d4"/><rect x="55" y="162.3" width="4" height="1.300" fill="#b5cea8"/><rect x="59" y="162.3" width="2" height="1.300" fill="#d4d4d4"/><rect x="4" y="164.3" width="2" height="1.300" fill="#c586c0"/><rect x="7" y="164.3" width="1" height="1.300" fill="#d4d4d4"/><rect x="8" y="164.3" width="5" height="1.300" fill="#9cdcfe"/><rect x="14" y="164.3" width="1" height="1.300" fill="#d4d4d4"/><rect x="16" y="164.3" width="1" height="1.300" fill="#b5cea8"/><rect x="17" y="164.3" width="1" height="1.300" fill="#d4d4d4"/><rect x="4" y="166.3" width="1" height="1.300" fill="#d4d4d4"/><rect x="8" y="168.3" width="6" height="1.300" fill="#dcdcaa"/><rect x="14" y="168.3" width="2" height="1.300" fill="#d4d4d4"/><rect x="16" y="168.3" width="8" height="1.300" fill="#9cdcfe"/><rect x="24" y="168.3" width="1" height="1.300" fill="#d4d4d4"/><rect x="25" y="168.3" width="1" height="1.300" fill="#9cdcfe"/><rect x="26" y="168.3" width="3" height="1.300" fill="#ce9178"/><rect x="4" y="170.3" width="1" height="1.300" fill="#d4d4d4"/><rect x="4" y="172.3" width="8" height="1.300" fill="#6a9955"/><rect x="4" y="174.3" width="3" height="1.300" fill="#9cdcfe"/><rect x="8" y="174.3" width="1" height="1.300" fill="#d4d4d4"/><rect x="10" y="174.3" width="4" height="1.300" fill="#dcdcaa"/><rect x="14" y="174.3" width="3" height="1.300" fill="#d4d4d4"/><rect x="4" y="176.3" width="2" height="1.300" fill="#c586c0"/><rect x="7" y="176.3" width="1" height="1.300" fill="#d4d4d4"/><rect x="8" y="176.3" width="3" height="1.300" fill="#9cdcfe"/><rect x="12" y="176.3" width="1" height="1.300" fill="#d4d4d4"/><rect x="14" y="176.3" width="1" height="1.300" fill="#b5cea8"/><rect x="15" y="176.3" width="1" height="1.300" fill="#d4d4d4"/><rect x="4" y="178.3" width="1" height="1.300" fill="#d4d4d4"/><rect x="8" y="180.3" width="6" height="1.300" fill="#6a9955"/><rect x="8" y="182.3" width="9" height="1.300" fill="#dcdcaa"/><rect x="17" y="182.3" width="1" height="1.300" fill="#d4d4d4"/><rect x="18" y="182.3" width="5" height="1.300" fill="#9cdcfe"/><rect x="23" y="182.3" width="2" height="1.300" fill="#d4d4d4"/><rect x="4" y="184.3" width="1" height="1.300" fill="#d4d4d4"/><rect x="4" y="186.3" width="4" height="1.300" fill="#c586c0"/><rect x="9" y="186.3" width="2" height="1.300" fill="#c586c0"/><rect x="12" y="186.3" width="1" height="1.300" fill="#d4d4d4"/><rect x="13" y="186.3" width="3" height="1.300" fill="#9cdcfe"/><rect x="17" y="186.3" width="2" height="1.300" fill="#d4d4d4"/><rect x="20" y="186.3" width="1" height="1.300" fill="#b5cea8"/><rect x="21" y="186.3" width="1" height="1.300" fill="#d4d4d4"/><rect x="4" y="188.3" width="1" height="1.300" fill="#d4d4d4"/><rect x="8" y="190.3" width="8" height="1.300" fill="#6a9955"/><rect x="8" y="192.3" width="12" height="1.300" fill="#dcdcaa"/><rect x="20" y="192.3" width="1" height="1.300" fill="#d4d4d4"/><rect x="21" y="192.3" width="5" height="1.300" fill="#9cdcfe"/><rect x="26" y="192.3" width="2" height="1.300" fill="#d4d4d4"/><rect x="4" y="194.3" width="1" height="1.300" fill="#d4d4d4"/><rect x="4" y="196.3" width="6" height="1.300" fill="#c586c0"/><rect x="11" y="196.3" width="1" height="1.300" fill="#b5cea8"/><rect x="12" y="196.3" width="1" height="1.300" fill="#d4d4d4"/><rect x="0" y="198.3" width="1" height="1.300" fill="#d4d4d4"/></svg>
<div class="abs" style="left:1549.5px;top:160px;width:112.5px;height:1.100px;background:#2a5684"></div>
<div class="abs" style="left:1662px;top:0;width:14px;height:620.3px;border-left:1px solid #353535;border-top:1px solid #2c2c2c"></div>
<div class="abs" style="left:1663px;top:372.500px;width:13px;height:2.500px;background:#c0c0c0"></div>
</div>
<div id="panel">
<div class="ptab" style="left:20px">输出</div><div class="ptab" style="left:66.400px">调试控制台</div><div class="ptab" style="left:145px;color:#e7e7e7">终端</div><div class="abs" style="left:143px;top:27.200px;width:26.500px;height:1px;background:#e7e7e7"></div>
<svg class="abs" style="left:1584px;top:7.700px" width="90" height="20" viewBox="0 0 90 20" fill="none" stroke="#c5c5c5" stroke-width="1.150">
<path d="M11.300 3.300v14M4.300 10.300h14"/><path d="M24.800 9l3.200 3.200 3.200-3.200"/><path d="M45.700 12.600l5-5 5 5"/><path d="M68.200 5.800l9 9M77.200 5.800l-9 9"/></svg>
<div class="trow" style="top:42.2px"><span class="g">lmos@lmos-PC</span>:<span class="bl">~/<span class="z">计算机基础</span>/code/28/shm</span>$ make run</div>
<div class="trow" style="top:58.2px"><span class="z">主进程访问共享内存的地址</span>:0x7f51bedfe000</div>
<div class="trow" style="top:74.2px"><span class="z">子进程访问共享内存的地址</span>:0x7f51bedfe000</div>
<div class="trow" style="top:90.2px"><span class="z">检查共享数据成功</span>:4088</div>
<div class="trow" style="top:106.2px"><span class="g">lmos@lmos-PC</span>:<span class="bl">~/<span class="z">计算机基础</span>/code/28/shm</span>$ <span style="display:inline-block;width:8px;height:15px;background:#cccccc;vertical-align:top;margin-top:0.500px"></span></div>
<div class="abs" style="left:1473.500px;top:35px;width:1px;height:233px;background:rgba(128,128,128,.35)"></div>
<div class="abs" style="left:1474.500px;top:57px;width:202px;height:22px;background:#37373d"></div>
<svg class="abs" style="left:1484.2px;top:38px" width="16" height="16" viewBox="0 0 16 16" fill="none" stroke="#c5c5c5" stroke-width="1.100"><rect x="1.500" y="1.500" width="13" height="13" rx="1"/><path d="M5.500 5l3 3-3 3"/></svg><div class="abs" style="left:1503.400px;top:35px;height:22px;line-height:22px;font-size:13px;letter-spacing:0.1px;color:#cccccc;white-space:nowrap">bash<span style="font-size:12px;color:#9a9a9a;margin-left:7px">msg</span></div>
<svg class="abs" style="left:1484.2px;top:60px" width="16" height="16" viewBox="0 0 16 16" fill="none" stroke="#c5c5c5" stroke-width="1.100"><rect x="1.500" y="1.500" width="13" height="13" rx="1"/><path d="M5.500 5l3 3-3 3"/></svg><div class="abs" style="left:1503.400px;top:57px;height:22px;line-height:22px;font-size:13px;letter-spacing:0.1px;color:#cccccc;white-space:nowrap">bash<span style="font-size:12px;color:#9a9a9a;margin-left:7px">shm</span></div>
</div>
</div>
<div id="status">
<div class="sb" style="left:0;width:34px;background:#16825d"></div>
<svg class="abs" style="left:10.600px;top:4.700px" width="14" height="14" viewBox="0 0 16 16" fill="#fff"><path d="M12.904 9.570 8.928 5.596l3.976-3.976-.619-.62L8 5.286v.619l4.285 4.285.62-.618zM3 5.620l4.072 4.072L3 13.763l.619.618L8 10v-.619L3.619 5 3 5.619z"/></svg>
<svg class="abs" style="left:42px;top:4px" width="14" height="14" viewBox="0 0 14 14" fill="none" stroke="#fff" stroke-width="1.100"><circle cx="7" cy="7" r="6"/><path d="M4.600 4.600l4.800 4.800M9.400 4.600 4.600 9.400"/></svg>
<span class="sb" style="left:59px">0</span>
<svg class="abs" style="left:68.500px;top:4px" width="14" height="14" viewBox="0 0 14 14" fill="none" stroke="#fff" stroke-width="1.100" stroke-linejoin="round"><path d="M7 1.500 13 12.500H1z"/><path d="M7 5.200v3.900M7 10v1.300"/></svg>
<span class="sb" style="left:85.500px">0</span>
<span class="sb" style="left:1538.5px">行 81，列 14</span>
<span class="sb" style="left:1622px">制表符长度: 4</span>
<span class="sb" style="left:1711px">UTF-8</span>
<span class="sb" style="left:1760.3px">LF</span>
<span class="sb" style="left:1789px">C</span>
<span class="sb" style="left:1812.6px">Linux</span>
<svg class="abs" style="left:1859.500px;top:4px" width="15" height="15" viewBox="0 0 16 16" fill="none" stroke="#fff" stroke-width="1.150" stroke-linejoin="round"><path d="M8.300 2h6.200v5.500h-2l-1.600 1.600V7.500"/><circle cx="5.200" cy="6.500" r="2.300"/><path d="M1 14.300c.4-2.600 2-4 4.200-4s3.800 1.400 4.200 4"/></svg>
<svg class="abs" style="left:1890.500px;top:4px" width="15" height="15" viewBox="0 0 16 16" fill="none" stroke="#fff" stroke-width="1.150" stroke-linejoin="round"><path d="M8.500 2.300C5.500 2 3.600 4 3.600 6.800v3.400L2.300 12.200h10.400l-1.200-2V8.600"/><path d="M6 13.800c.6 1 2.200 1 2.800 0"/><circle cx="11.800" cy="4" r="2.600" fill="#fff" stroke="none"/></svg>
</div>
</div>
<svg class="abs" style="left:240px;top:796px" width="648" height="64" viewBox="0 0 648 64" fill="none"><rect x="9.300" y="8.500" width="629.400" height="46.900" stroke="#f01f4b" stroke-width="2.700"/></svg>
</body></html>
